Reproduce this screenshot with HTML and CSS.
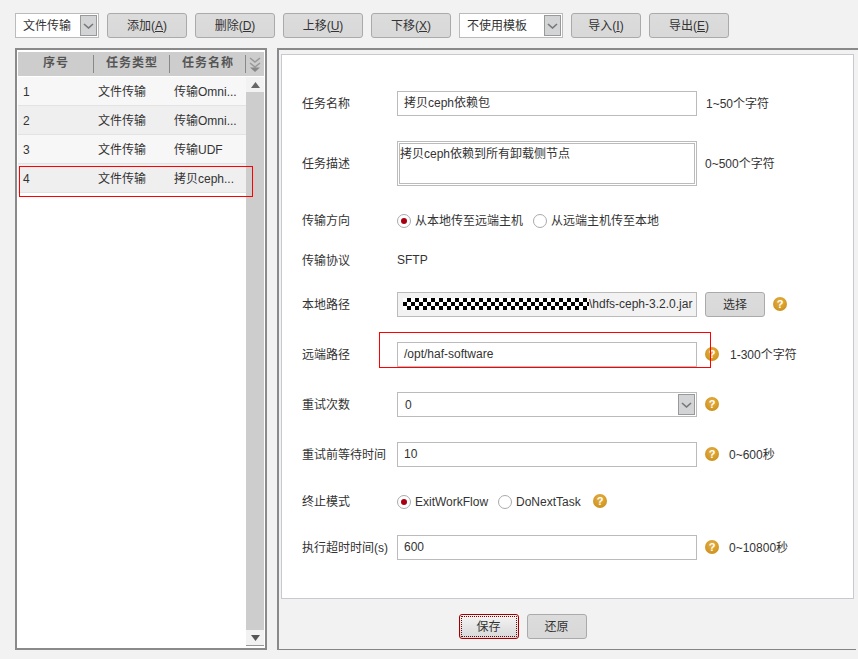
FILE: index.html
```html
<!DOCTYPE html>
<html lang="zh">
<head>
<meta charset="utf-8">
<title>文件传输</title>
<link rel="stylesheet" href="styles.css">
</head>
<body>
<div class="toolbar">
  <div class="combo combo-type"><span class="combo-text">文件传输</span><span class="combo-arrow"><svg width="11" height="6" viewBox="0 0 11 6"><path d="M1 1l4.5 4L10 1" fill="none" stroke="#777" stroke-width="1.6"/></svg></span></div>
  <button class="btn btn-80">添加(<u>A</u>)</button>
  <button class="btn btn-80">删除(<u>D</u>)</button>
  <button class="btn btn-80">上移(<u>U</u>)</button>
  <button class="btn btn-80">下移(<u>X</u>)</button>
  <div class="combo combo-tpl"><span class="combo-text">不使用模板</span><span class="combo-arrow"><svg width="11" height="6" viewBox="0 0 11 6"><path d="M1 1l4.5 4L10 1" fill="none" stroke="#777" stroke-width="1.6"/></svg></span></div>
  <button class="btn btn-70">导入(<u>I</u>)</button>
  <button class="btn btn-80">导出(<u>E</u>)</button>
</div>
<div class="main">
  <div class="list-panel">
    <div class="list-head">
      <div class="head-cell">序号</div>
      <div class="head-cell">任务类型</div>
      <div class="head-cell">任务名称</div>
      <div class="head-more"><svg width="14" height="16" viewBox="0 0 14 16"><path d="M2 1l5 4 5-4M2 6l5 4 5-4" fill="none" stroke="#999" stroke-width="1.6"/><path d="M2 10.500l5 4.500 5-4.500z" fill="#888"/></svg></div>
    </div>
    <div class="list-body">
      <div class="rows">
        <div class="row"><span class="cell">1</span><span class="cell">文件传输</span><span class="cell">传输Omni...</span></div>
        <div class="row"><span class="cell">2</span><span class="cell">文件传输</span><span class="cell">传输Omni...</span></div>
        <div class="row"><span class="cell">3</span><span class="cell">文件传输</span><span class="cell">传输UDF</span></div>
        <div class="row"><span class="cell">4</span><span class="cell">文件传输</span><span class="cell">拷贝ceph...</span></div>
      </div>
      <div class="scrollbar">
        <div class="scroll-btn scroll-up"><svg width="9" height="6" viewBox="0 0 9 6"><path d="M4.500 0L9 6H0z" fill="#666"/></svg></div>
        <div class="scroll-track"></div>
        <div class="scroll-btn scroll-down"><svg width="9" height="6" viewBox="0 0 9 6"><path d="M0 0h9L4.500 6z" fill="#555"/></svg></div>
      </div>
    </div>
    <div class="mark mark-row"></div>
  </div>
  <div class="detail-panel">
    <div class="form">
      <div class="field gap-25">
        <span class="label">任务名称</span>
        <div class="input">拷贝ceph依赖包</div>
        <span class="hint hint-near">1~50个字符</span>
      </div>
      <div class="field field-area gap-22">
        <span class="label">任务描述</span>
        <div class="area">拷贝ceph依赖到所有卸载侧节点</div>
        <span class="hint hint-area">0~500个字符</span>
      </div>
      <div class="field gap-15">
        <span class="label">传输方向</span>
        <span class="radio on"></span><span class="radio-text text-first">从本地传至远端主机</span>
        <span class="radio"></span><span class="radio-text">从远端主机传至本地</span>
      </div>
      <div class="field gap-19">
        <span class="label">传输协议</span>
        <span class="plain">SFTP</span>
      </div>
      <div class="field gap-25">
        <span class="label">本地路径</span>
        <div class="input input-off"><span class="checker"></span>\hdfs-ceph-3.2.0.jar</div>
        <button class="btn btn-60 btn-pick">选择</button>
        <span class="help help-pick">?</span>
      </div>
      <div class="field field-mark gap-25">
        <span class="label">远端路径</span>
        <div class="input">/opt/haf-software</div>
        <span class="help">?</span>
        <span class="hint hint-help hint-wide">1-300个字符</span>
        <div class="mark mark-path"></div>
      </div>
      <div class="field gap-25">
        <span class="label">重试次数</span>
        <div class="combo combo-wide"><span class="combo-text">0</span><span class="combo-arrow"><svg width="11" height="6" viewBox="0 0 11 6"><path d="M1 1l4.500 4L10 1" fill="none" stroke="#777" stroke-width="1.6"/></svg></span></div>
        <span class="help">?</span>
      </div>
      <div class="field gap-22">
        <span class="label">重试前等待时间</span>
        <div class="input">10</div>
        <span class="help">?</span>
        <span class="hint hint-help">0~600秒</span>
      </div>
      <div class="field gap-21">
        <span class="label">终止模式</span>
        <span class="radio on"></span><span class="radio-text text-exit">ExitWorkFlow</span>
        <span class="radio"></span><span class="radio-text text-next">DoNextTask</span>
        <span class="help help-mode">?</span>
      </div>
      <div class="field">
        <span class="label">执行超时时间(s)</span>
        <div class="input">600</div>
        <span class="help">?</span>
        <span class="hint hint-help">0~10800秒</span>
      </div>
    </div>
    <div class="foot">
      <button class="btn btn-60 btn-save">保存</button>
      <button class="btn btn-60">还原</button>
    </div>
  </div>
</div>
</body>
</html>
```
FILE: styles.css
```css
* { box-sizing: border-box; }
html, body { margin: 0; padding: 0; }
body {
  width: 858px;
  height: 659px;
  overflow: hidden;
  background: #f2f2f2;
  padding: 13px 0 0 15px;
  color: #333;
  font: 12px/1.2 "Liberation Sans", "Noto Sans CJK SC", sans-serif;
}
.toolbar { display: flex; gap: 8px; height: 25px; margin-bottom: 10px; }
.btn {
  height: 25px;
  padding: 2px 0 0;
  border: 1px solid #aaa;
  border-radius: 3px;
  background: linear-gradient(#dcdcdc, #d8d8d8);
  color: #333;
  font: inherit;
}
.btn u { text-underline-offset: 1px; }
.btn-80 { width: 80px; }
.btn-70 { width: 70px; }
.btn-60 { width: 60px; }
.combo {
  display: flex;
  align-items: center;
  justify-content: space-between;
  height: 25px;
  padding: 1px 1px 1px 7px;
  border: 1px solid #bbb;
  background: #fff;
}
.combo-text { padding-top: 2px; }
.combo-type { width: 84px; }
.combo-tpl { width: 104px; }
.combo-wide { width: 300px; }
.combo-arrow {
  display: flex;
  align-items: center;
  justify-content: center;
  width: 17px;
  height: 21px;
  border: 1px solid #999;
  background: #d2d4d6;
}

.main { display: flex; gap: 10px; }
.list-panel {
  position: relative;
  display: flex;
  flex-direction: column;
  width: 252px;
  height: 602px;
  padding: 2px 1px 0;
  border: 2px solid #8a8a8a;
  background: #fff;
}
.list-head {
  display: grid;
  grid-template-columns: 76px 76px 76px 18px;
  align-items: center;
  flex: none;
  height: 24px;
  margin-bottom: 1px;
  background: #cdcdcd;
}
.head-cell {
  height: 18px;
  padding-left: 1px;
  line-height: 16px;
  border-right: 1px solid #888;
  text-align: center;
  font-weight: bold;
  letter-spacing: 1px;
  color: #555;
}
.head-more { display: flex; justify-content: center; padding-top: 1px; }
.list-body { display: flex; flex: 1; min-height: 0; }
.rows { flex: 1; }
.row {
  display: grid;
  grid-template-columns: 76px 76px 76px;
  align-items: center;
  height: 29px;
  padding-top: 2px;
  border-bottom: 1px solid #e3e3e3;
  background: #f7f7f7;
}
.row:nth-child(even) { background: #efefef; }
.cell { padding-left: 4px; white-space: nowrap; }
.cell:first-child { padding-left: 5px; }
.scrollbar {
  display: flex;
  flex-direction: column;
  flex: none;
  width: 18px;
  height: 569px;
}
.scroll-btn {
  display: flex;
  align-items: center;
  justify-content: center;
  flex: none;
  background: #f2f2f2;
}
.scroll-up { height: 15px; }
.scroll-down { height: 16px; border-bottom: 1px solid #999; }
.scroll-track { flex: 1; background: #cdcdcd; }
.mark { position: absolute; border: 1px solid #f00; pointer-events: none; }
.mark-row { left: 2px; top: 116px; width: 234px; height: 31px; }
.mark-path { left: 77px; top: -10px; width: 332px; height: 36px; }

.detail-panel {
  display: flex;
  flex-direction: column;
  width: 581px;
  height: 602px;
  padding: 4px 0 0 2px;
  border-top: 2px solid #8a8a8a;
  border-left: 2px solid #8a8a8a;
}
.form {
  flex: none;
  width: 573px;
  height: 545px;
  padding: 36px 0 0 20px;
  border: 1px solid #c8c8d0;
  background: #fff;
}
.field { position: relative; display: flex; align-items: center; height: 25px; }
.field-area { height: 45px; }
.gap-25 { margin-bottom: 25px; }
.gap-22 { margin-bottom: 22px; }
.gap-21 { margin-bottom: 21px; }
.gap-19 { margin-bottom: 19px; }
.gap-15 { margin-bottom: 15px; }
.label { flex: none; width: 95px; padding-top: 2px; white-space: nowrap; }
.input {
  display: flex;
  align-items: center;
  flex: none;
  width: 300px;
  height: 25px;
  padding: 0 0 0 6px;
  border: 1px solid #bbb;
  background: #fff;
  white-space: nowrap;
}
.input-off { background: #f2f2f2; }
.checker {
  flex: none;
  width: 186px;
  height: 12px;
  margin: -1px 0 0 -1px;
  background: conic-gradient(#000 25%, #fff 0 50%, #000 0 75%, #fff 0) 0 0 / 8px 8px;
}
.area {
  flex: none;
  width: 300px;
  height: 45px;
  padding: 1px 0 0;
  border: 3px double #bbb;
  line-height: 19px;
  background: #fff;
}
.plain { line-height: 25px; }
.hint { flex: none; padding-top: 2px; white-space: nowrap; }
.hint-near { margin-left: 9px; }
.hint-area { margin-left: 8px; }
.hint-help { margin-left: 10px; }
.hint-wide { margin-left: 11px; }
.radio {
  position: relative;
  flex: none;
  width: 14px;
  height: 14px;
  border: 1px solid #aaa;
  border-radius: 50%;
  background: #fff;
}
.radio.on::after {
  content: "";
  position: absolute;
  left: 3px;
  top: 3px;
  width: 6px;
  height: 6px;
  border-radius: 50%;
  background: #a80010;
}
.radio-text { flex: none; margin-left: 4px; padding-top: 2px; white-space: nowrap; }
.text-first { width: 118px; }
.text-exit { width: 83px; }
.text-next { width: 77px; }
.help {
  flex: none;
  width: 14px;
  height: 14px;
  margin: -2px 0 0 8px;
  border-radius: 50%;
  background: radial-gradient(circle at 50% 35%, #e8b040, #c58a17);
  color: #fff;
  font-size: 11px;
  font-weight: bold;
  line-height: 14px;
  text-align: center;
}
.help-mode { margin-left: 0; }
.btn-pick { flex: none; margin-left: 8px; }
.foot {
  display: flex;
  justify-content: center;
  gap: 8px;
  flex: none;
  width: 577px;
  height: 51px;
  margin-left: -2px;
  padding: 15px 90px 0 0;
  border-bottom: 1px solid #858585;
}
.btn-save {
  border-color: #a00000;
  background: linear-gradient(#f4f4f4, #d8d8d8);
  outline: 1px dotted #800000;
  outline-offset: -3px;
}
```
